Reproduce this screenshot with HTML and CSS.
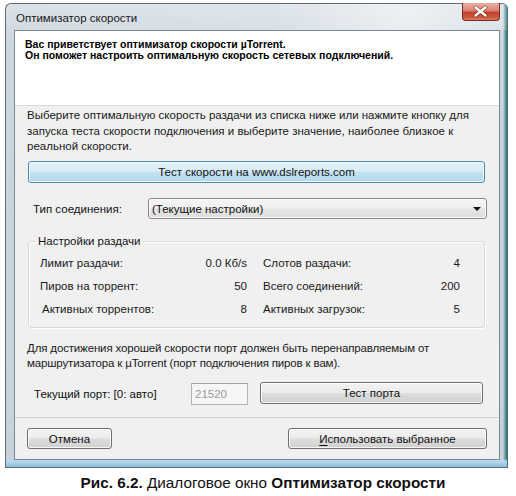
FILE: index.html
```html
<!DOCTYPE html>
<html lang="ru">
<head>
<meta charset="utf-8">
<title>Оптимизатор скорости</title>
<link rel="stylesheet" href="styles.css">
</head>
<body>
<div class="window">
  <div class="titlebar">
    <span class="title">Оптимизатор скорости</span>
    <div class="close">
      <svg width="38" height="18" viewBox="0 0 38 18">
        <path d="M14 5.5 L24 13.5 M24 5.5 L14 13.5" stroke="#6b2418" stroke-width="4.2" stroke-linecap="round" fill="none" opacity="0.55"/>
        <path d="M14 5.5 L24 13.5 M24 5.5 L14 13.5" stroke="#ffffff" stroke-width="2.6" stroke-linecap="round" fill="none"/>
      </svg>
    </div>
  </div>
  <div class="client">
    <div class="header">
      <p class="welcome">Вас приветствует оптимизатор скорости µTorrent.<br>Он поможет настроить оптимальную скорость сетевых подключений.</p>
    </div>
    <div class="body">
      <p class="intro">Выберите оптимальную скорость раздачи из списка ниже или нажмите кнопку для<br>запуска теста скорости подключения и выберите значение, наиболее близкое к<br>реальной скорости.</p>
      <div class="btn btn-blue btn-wide">Тест скорости на www.dslreports.com</div>
      <div class="type-row">
        <span class="type-label">Тип соединения:</span>
        <div class="combo"><span>(Текущие настройки)</span><span class="arrow"></span></div>
      </div>
      <fieldset class="group">
        <legend>Настройки раздачи</legend>
        <div class="grid">
          <div class="pair"><span>Лимит раздачи:</span><span>0.0 Кб/s</span></div>
          <div class="pair"><span>Слотов раздачи:</span><span>4</span></div>
          <div class="pair"><span>Пиров на торрент:</span><span>50</span></div>
          <div class="pair"><span>Всего соединений:</span><span>200</span></div>
          <div class="pair"><span class="indent">Активных торрентов:</span><span>8</span></div>
          <div class="pair"><span>Активных загрузок:</span><span>5</span></div>
        </div>
      </fieldset>
      <p class="port-note">Для достижения хорошей скорости порт должен быть перенаправляемым от<br>маршрутизатора к µTorrent (порт подключения пиров к вам).</p>
      <div class="port-row">
        <span class="port-label">Текущий порт: [0: авто]</span>
        <div class="port-input">21520</div>
        <div class="btn btn-port">Тест порта</div>
      </div>
    </div>
    <div class="footer">
      <div class="btn btn-cancel">Отмена</div>
      <div class="btn btn-use"><u>И</u>спользовать выбранное</div>
    </div>
  </div>
</div>
<p class="caption"><b>Рис. 6.2.</b> Диалоговое окно <b>Оптимизатор скорости</b></p>
</body>
</html>
```
FILE: styles.css
```css
* { box-sizing: border-box; }
html, body { margin: 0; padding: 0; background: #ffffff; }
body { font-family: "Liberation Sans", Arial, sans-serif; color: #111; }
p { margin: 0; }

.window {
  width: 503px;
  margin: 3px 0 0 5px;
  border: 1px solid #5d6b78;
  border-right-color: #3d6d72;
  border-radius: 6px 6px 0 0;
  padding-bottom: 7px;
  background:
    linear-gradient(to top, #8fbfdc 0, #b8d8ee 6px, rgba(200,215,228,0) 8px),
    linear-gradient(to right, rgba(0,0,0,0) 497px, #6c9ea3 499px, #3f7075 501px),
    linear-gradient(to bottom, #dbe2e8 0, #ccd6df 40px, #c7d2dc 100%);
}

.titlebar {
  height: 26px;
  display: flex;
  align-items: flex-start;
  padding: 0 7px 0 10px;
  background: linear-gradient(to right, rgba(255,255,255,0) 0, rgba(255,255,255,0.15) 55%, rgba(255,255,255,0.55) 80%, rgba(255,255,255,0.2) 100%);
}
.title {
  font-size: 11.5px;
  line-height: 16px;
  margin-top: 6px;
  color: #1b1b1b;
}
.close {
  margin-left: auto;
  margin-top: -1px;
  width: 38px;
  height: 18px;
  border: 1px solid #7a2c21;
  border-top: none;
  border-radius: 0 0 4px 4px;
  background: linear-gradient(to bottom, #eab1a4 0, #d98573 45%, #c4432f 55%, #c9523a 80%, #dc7a5e 100%);
  display: flex;
}
.close svg { display: block; margin: -1px 0 0 -1px; }

.client {
  margin: 0 7px 0 8px;
  border: 1px solid #7b8896;
  background: #f0f0f0;
}
.header {
  height: 75px;
  background: #ffffff;
  border-bottom: 1px solid #dadada;
  padding: 8px 0 0 10px;
}
.welcome {
  font-weight: bold;
  font-size: 10.5px;
  line-height: 11px;
  color: #000;
}

.body {
  padding: 0 14px 12px 12px;
  font-size: 11.5px;
}
.intro {
  margin-top: 2px;
  line-height: 15.5px;
  color: #1a1a1a;
  white-space: nowrap;
}

.btn {
  display: flex;
  align-items: center;
  justify-content: center;
  height: 22px;
  border: 1px solid #707070;
  border-radius: 3px;
  background: linear-gradient(to bottom, #f3f3f3 0, #ebebeb 48%, #dddddd 52%, #d0d0d0 100%);
  box-shadow: inset 0 0 0 1px rgba(255,255,255,0.8);
  font-size: 11.5px;
  color: #111;
}
.btn-blue {
  border-color: #4b8ab8;
  background: linear-gradient(to bottom, #e4f2fa 0, #d6ecf7 48%, #c3e2f1 52%, #b3d8ec 100%);
}
.btn-wide {
  margin: 6.5px 0 0 1px;
}

.type-row {
  margin-top: 15px;
  display: grid;
  grid-template-columns: 121px 1fr;
  align-items: center;
  margin-right: -2px;
}
.type-label { padding-left: 6px; }
.combo {
  height: 21px;
  display: flex;
  align-items: center;
  justify-content: space-between;
  padding: 0 5px 0 3px;
  border: 1px solid #8a8a8a;
  border-radius: 3px;
  background: linear-gradient(to bottom, #f6f6f6 0, #efefef 48%, #e5e5e5 52%, #dedede 100%);
  box-shadow: inset 0 0 0 1px rgba(255,255,255,0.7);
}
.arrow {
  width: 0;
  height: 0;
  border-left: 4px solid transparent;
  border-right: 4px solid transparent;
  border-top: 4px solid #111;
  margin-top: 1px;
}

.group {
  margin: 14.5px 0 0 1px;
  padding: 0 24px 6.5px 11px;
  border: 1px solid #d3dbe1;
  border-radius: 3px;
  box-shadow: inset 1px 1px 0 #ffffff, 1px 1px 0 #ffffff;
}
.group legend {
  margin-left: -4px;
  padding: 0 2px;
  line-height: 15px;
  font-size: 11.5px;
}
.grid {
  margin-top: 3px;
  display: grid;
  grid-template-columns: 207px 197px;
  column-gap: 16px;
}
.pair {
  display: flex;
  justify-content: space-between;
  line-height: 23px;
  color: #1a1a1a;
}
.indent { padding-left: 2px; }

.port-note {
  margin-top: 12.5px;
  line-height: 15px;
  color: #1a1a1a;
  white-space: nowrap;
  letter-spacing: -0.15px;
}
.port-row {
  margin-top: 11.5px;
  display: flex;
  align-items: flex-start;
}
.port-label {
  width: 164px;
  flex: none;
  padding-left: 7px;
  line-height: 22px;
  margin-top: 0.5px;
}
.port-input {
  width: 57px;
  height: 22px;
  margin-top: 1px;
  border: 1px solid #b4b4b4;
  border-top-color: #a0a0a0;
  background: #f6f6f6;
  color: #9a9a9a;
  padding-left: 3px;
  line-height: 20px;
}
.btn-port {
  width: 223px;
  margin-left: 12px;
}

.footer {
  border-top: 1px solid #d0d0d0;
  padding: 10px 12px 10px 12px;
  display: flex;
  justify-content: space-between;
}
.footer .btn { height: 21px; }
.btn-cancel { width: 85px; }
.btn-use { width: 199px; }
.btn-use u { text-decoration-thickness: 1px; text-underline-offset: 2px; }

.caption {
  margin-top: 6px;
  padding-left: 10px;
  text-align: center;
  font-size: 15.3px;
  line-height: 18px;
  color: #111;
}
```
